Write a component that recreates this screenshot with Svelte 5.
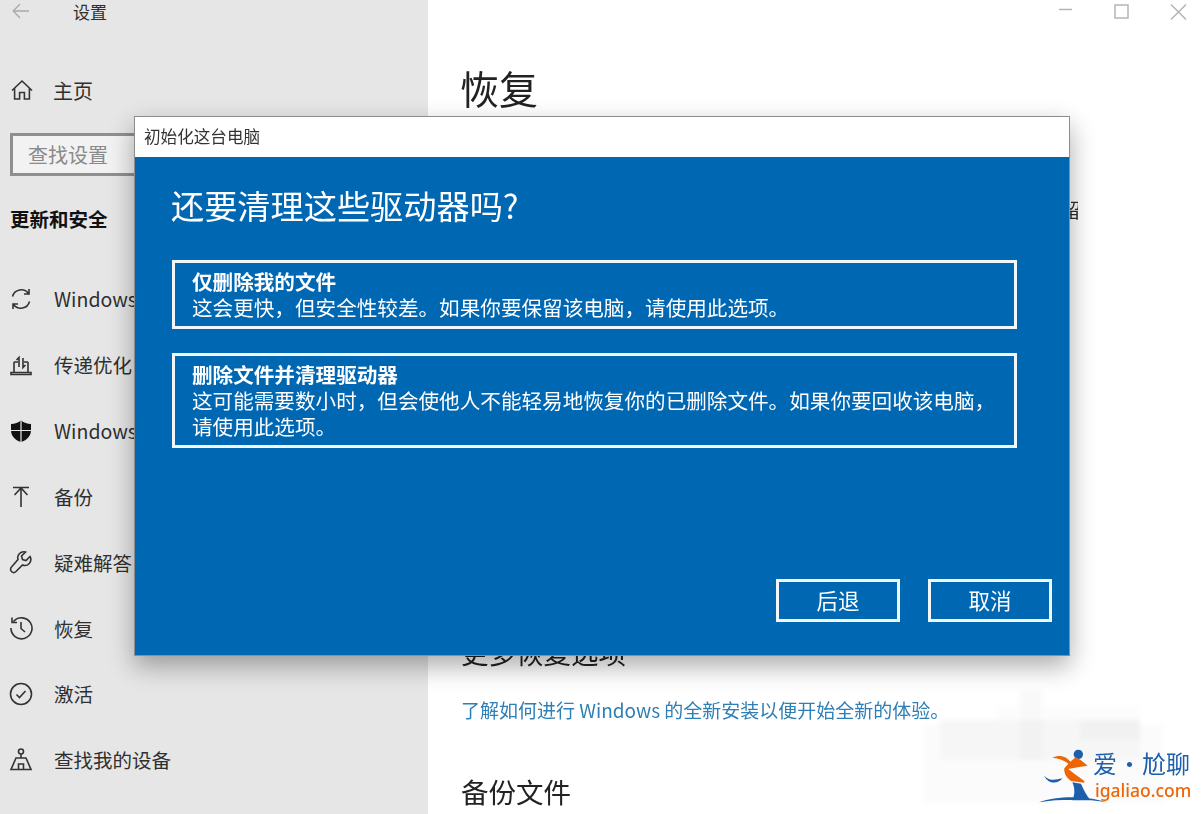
<script>
  const navItems = [
    { label: 'Windows 更新', icon: 'sync' },
    { label: '传递优化', icon: 'delivery' },
    { label: 'Windows 安全中心', icon: 'shield' },
    { label: '备份', icon: 'backup' },
    { label: '疑难解答', icon: 'wrench' },
    { label: '恢复', icon: 'history' },
    { label: '激活', icon: 'check' },
    { label: '查找我的设备', icon: 'find' }
  ];

  const smudges = [
    { x: 0, y: 35, w: 240, h: 78, c: '#fbfbfb' },
    { x: 75, y: 15, w: 140, h: 30, c: '#fcfcfc' },
    { x: 97, y: 0, w: 22, h: 35, c: '#f9f9f9' },
    { x: 17, y: 30, w: 200, h: 40, c: '#f6f6f6' },
    { x: 97, y: 30, w: 22, h: 40, c: '#f2f2f2' },
    { x: 157, y: 30, w: 60, h: 20, c: '#f1f1f1' }
  ];
</script>

<div class="window">
  <aside class="sidebar">
    <div class="titlebar">
      <svg class="back" width="18" height="16" viewBox="0 0 18 16"><path d="M8 1 1.200 8 8 15M1.200 8H17" /></svg>
      <span>设置</span>
    </div>

    <div class="home">
      <svg class="icon" width="24" height="24" viewBox="0 0 24 24"><path d="M2 12.500 12 3l10 9.500M4.600 10.500V21h5V14.500h4.800V21h5V10.500" /></svg>
      <span>主页</span>
    </div>

    <div class="search">查找设置</div>
    <h2>更新和安全</h2>

    <nav>
      {#each navItems as item}
        <div class="nav-row">
          <svg class="icon" width="24" height="24" viewBox="0 0 24 24">
            {#if item.icon === 'sync'}
              <path d="M3.500 9.500A9 9 0 0 1 19.500 6.500M20.500 14.500A9 9 0 0 1 4.500 17.500M20 2v5h-5M4 22v-5h5" />
            {:else if item.icon === 'delivery'}
              <path d="M5 9v10M19 9v10M5 9h4M15 9h4M2 19.500h20v2H2zM10 14V4.500L7.500 7M14 5v9.500l2.500-2.500" />
            {:else if item.icon === 'shield'}
              <path class="solid" d="M12 1.500c3 2.200 6 3.200 10 3.500v6c0 6-4 10-10 12C6 21 2 17 2 11V5c4-.3 7-1.300 10-3.500Z" />
              <path class="cut" d="M12 1.500V23M2 11.500h20" />
            {:else if item.icon === 'backup'}
              <path d="M4 3.500h16M12 3.500V23M5.500 11 12 4l6.500 7" />
            {:else if item.icon === 'wrench'}
              <path d="M21 6.500 17 10.500l-3.500-1-1-3.500 4-4a6 6 0 0 0-7.500 7.500L2.500 17a3 3 0 0 0 4.500 4.500l6.500-6.500A6 6 0 0 0 21 6.500Z" />
            {:else if item.icon === 'history'}
              <path d="M4.500 5.500A10.500 10.500 0 1 1 2 12M3 1.500v5h5M12 6v6.500l4 3.500" />
            {:else if item.icon === 'check'}
              <circle cx="12" cy="12" r="10.500" />
              <path d="m7.500 12.500 3 3 6-6.500" />
            {:else}
              <circle cx="12" cy="3.500" r="2.500" />
              <path d="M12 6v4M7 10h10l5 11.500H2ZM9.500 21.500V16h5v5.500" />
            {/if}
          </svg>
          <span>{item.label}</span>
        </div>
      {/each}
    </nav>
  </aside>

  <main class="content">
    <div class="controls">
      <svg width="20" height="14" viewBox="0 0 20 14"><path d="M3 6.500h13" /></svg>
      <svg width="20" height="18" viewBox="0 0 20 18"><rect x="3" y="2" width="13" height="13" /></svg>
      <svg width="20" height="18" viewBox="0 0 20 18"><path d="M3 1.500 18 16.500M18 1.500 3 16.500" /></svg>
    </div>

    <h1>恢复</h1>
    <p class="behind">如果电脑未正常运行，初始化电脑可能会解决问题。初始化时，可保留</p>

    <h3 class="more">更多恢复选项</h3>
    <a href="#link" class="link">了解如何进行 Windows 的全新安装以便开始全新的体验。</a>
    <h3 class="backup">备份文件</h3>

    <div class="smudge">
      {#each smudges as s}
        <i style="left:{s.x}px;top:{s.y}px;width:{s.w}px;height:{s.h}px;background:{s.c}"></i>
      {/each}
    </div>

    <div class="logo">
      <svg width="74" height="60" viewBox="0 0 222 180">
        <circle cx="130" cy="28" r="14" fill="#1b5fad" />
        <path fill="#ec6608" d="M52 38C75 27 95 35 106 50L122 37 136 44 158 62 128 67 100 72 118 86 148 108 148 113 108 108C94 98 86 84 88 70L100 56C88 46 72 40 52 38Z" />
        <path fill="#1b5fad" d="M28 92C42 108 60 106 82 100 72 116 40 120 28 92ZM112 112 138 116C146 134 154 152 168 166H112C120 150 120 130 112 112ZM12 172C70 150 160 154 216 172 160 162 70 162 12 172Z" />
      </svg>
      <div class="logo-text">
        <div class="logo-cn"><span>爱</span><span class="dot">·</span><span>尬聊</span></div>
        <div class="logo-en">igaliao.com</div>
      </div>
    </div>
  </main>

  <section class="dialog">
    <header>初始化这台电脑</header>
    <div class="dialog-body">
      <h2>还要清理这些驱动器吗?</h2>

      <button class="option first">
        <strong>仅删除我的文件</strong>
        <span>这会更快，但安全性较差。如果你要保留该电脑，请使用此选项。</span>
      </button>

      <button class="option">
        <strong>删除文件并清理驱动器</strong>
        <span>这可能需要数小时，但会使他人不能轻易地恢复你的已删除文件。如果你要回收该电脑，<br />请使用此选项。</span>
      </button>

      <div class="actions">
        <button>后退</button>
        <button>取消</button>
      </div>
    </div>
  </section>
</div>

<style>
  :global(body) {
    overflow: hidden;
    background: #fff;
  }

  .window {
    position: relative;
    display: flex;
    width: 1203px;
    height: 814px;
    overflow: hidden;
    font-family: "Noto Sans CJK SC", "Noto Sans", sans-serif;
    color: #2f2f2f;
    filter: blur(0.4px);
  }

  .sidebar {
    flex: none;
    width: 428px;
    background: #e6e6e6;
    white-space: nowrap;
  }

  .titlebar {
    display: flex;
    align-items: center;
    height: 22px;
    padding-left: 12px;
    font-size: 17px;
  }

  .titlebar span {
    margin-left: 43px;
  }

  .back path {
    fill: none;
    stroke: #a9a9a9;
    stroke-width: 1.300;
  }

  .icon {
    flex: none;
    fill: none;
    stroke: #333;
    stroke-width: 1.600;
  }

  .icon .solid {
    fill: #111;
    stroke: none;
  }

  .icon .cut {
    stroke: #e6e6e6;
    stroke-width: 1.200;
  }

  .home {
    display: flex;
    align-items: center;
    gap: 19px;
    height: 30px;
    margin-top: 53px;
    padding-left: 10px;
    font-size: 20px;
  }

  .search {
    box-sizing: border-box;
    width: 300px;
    height: 43px;
    margin: 28px 0 0 10px;
    padding-left: 15px;
    border: 3px solid #8f8f8f;
    background: #f2f2f2;
    color: #8a8a8a;
    font-size: 20px;
    line-height: 38px;
  }

  .sidebar h2 {
    margin: 28px 0 0 10px;
    color: #111;
    font-size: 19.500px;
    font-weight: 700;
    line-height: 30px;
  }

  nav {
    margin-top: 32px;
  }

  .nav-row {
    display: flex;
    align-items: center;
    gap: 21px;
    height: 65.850px;
    padding-left: 9px;
    font-size: 19.500px;
  }

  .content {
    position: relative;
    flex: 1;
    padding-left: 33px;
    white-space: nowrap;
  }

  .controls {
    position: absolute;
    top: 3px;
    right: 15px;
    display: flex;
    gap: 36px;
    align-items: flex-start;
  }

  .controls svg {
    fill: none;
    stroke: #b5b5b5;
    stroke-width: 1.500;
  }

  h1 {
    margin: 60px 0 0 -1px;
    color: #222;
    font-size: 39px;
    font-weight: 400;
    line-height: 54px;
  }

  .behind {
    width: 617px;
    margin: 81px 0 0;
    overflow: hidden;
    font-size: 20px;
    line-height: 30px;
  }

  h3 {
    margin: 0;
    color: #222;
    font-size: 27.500px;
    font-weight: 400;
    line-height: 44px;
  }

  .more {
    margin-top: 405px;
  }

  .link {
    display: block;
    margin-top: 21px;
    color: #2d7fb5;
    font-size: 19px;
    line-height: 30px;
    text-decoration: none;
  }

  .backup {
    margin-top: 44px;
  }

  .smudge {
    position: absolute;
    left: 495px;
    top: 690px;
    width: 240px;
    height: 115px;
    filter: blur(2px);
  }

  .smudge i {
    position: absolute;
  }

  .logo {
    position: absolute;
    left: 607px;
    top: 745px;
    display: flex;
  }

  .logo-text {
    margin: 5px 0 0 -16px;
  }

  .logo-cn {
    display: flex;
    color: #1b5fad;
    font-size: 24px;
    line-height: 26px;
  }

  .dot {
    width: 25px;
    text-align: center;
  }

  .logo-en {
    margin: 3px 0 0 2px;
    color: #ec6608;
    font-family: "Noto Sans", sans-serif;
    font-size: 17.500px;
    font-weight: 500;
    line-height: 22px;
  }

  .dialog {
    position: absolute;
    left: 134px;
    top: 116px;
    box-sizing: border-box;
    width: 936px;
    height: 540px;
    display: flex;
    flex-direction: column;
    border: 1px solid #8e8e8e;
    box-shadow: 0 10px 24px rgba(0, 0, 0, 0.33);
    background: #0067b3;
  }

  header {
    flex: none;
    height: 40px;
    padding-left: 9px;
    background: #fff;
    color: #333;
    font-size: 16.600px;
    line-height: 38px;
  }

  .dialog-body {
    flex: 1;
    display: flex;
    flex-direction: column;
    padding: 0 17px 33px 37px;
    color: #fff;
  }

  .dialog-body h2 {
    margin: 24px 0 0 -1px;
    font-size: 33.200px;
    font-weight: 400;
    line-height: 48px;
  }

  button {
    font: inherit;
    color: inherit;
    background: none;
    border: 3px solid #f0f6fa;
    border-radius: 0;
  }

  .option {
    display: block;
    box-sizing: border-box;
    width: 845px;
    margin-top: 24px;
    padding: 5px 17px 6px;
    text-align: left;
    font-size: 20.600px;
    line-height: 26px;
  }

  .option.first {
    margin-top: 31px;
  }

  .option strong,
  .option span {
    display: block;
  }

  .actions {
    margin-top: auto;
    display: flex;
    justify-content: flex-end;
    gap: 28px;
  }

  .actions button {
    box-sizing: border-box;
    width: 124px;
    height: 43px;
    padding: 0 0 3px;
    font-size: 21.500px;
  }
</style>
